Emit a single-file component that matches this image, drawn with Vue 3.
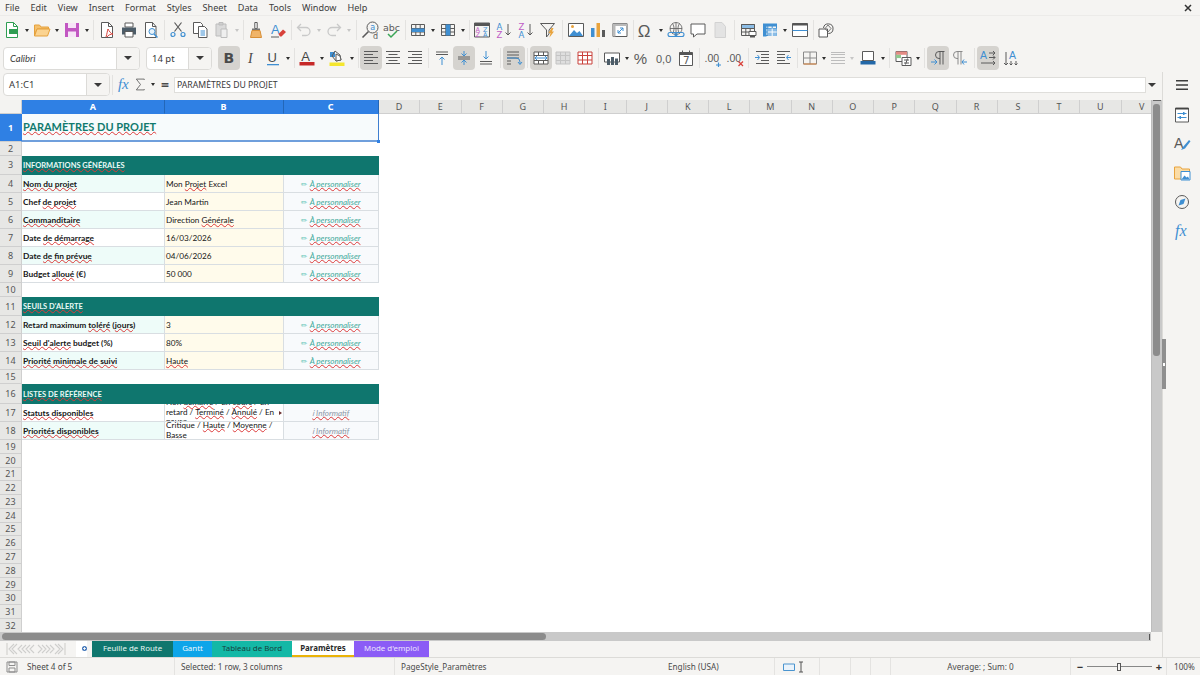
<script setup>
import { h } from 'vue'

const L = (d, stroke = '#5a5a5a', w = 1) => ({ d, stroke, fill: 'none', 'stroke-width': w })
const F = (d, fill, stroke = 'none') => ({ d, fill, stroke })
const T = (t, x, y, size, fill = '#555', style = 'normal', weight = 400, fam = 'DejaVu Sans, sans-serif') => ({ t, x, y, size, fill, style, weight, fam })

const B = '#3f8fd2', G = '#5a5a5a', O = '#e8a33d', R = '#d8413a', D = '#c9c9c9'
const SANS = 'Liberation Sans, sans-serif'
const SERIF = 'Liberation Serif, serif'
const lines = (ys, x1 = 2, x2 = 16, c = G) => L(ys.map((y) => `M${x1} ${y}H${x2}`).join(''), c)
const table = (c = G) => L('M2.5 3.5h13v11h-13zM2.5 7.5h13M2.5 11h13M6.8 3.5v11M11.2 3.5v11', c)
const dnArrow = (x, c = G) => L(`M${x} 3v11M${x - 2.5} 11.5l2.5 2.5 2.5-2.5`, c)

const icons = {
  new: [F('M3.5 1.5h7l4 4v11h-11z', '#fff', '#2f9e52'), L('M10.5 1.5v4h4', '#2f9e52'), F('M6 8h9v5H6z', '#2f9e52')],
  open: [F('M1.5 4h5l1.5 2h7.5v2H4L1.5 15z', '#f5c06c', '#e5a13c'), F('M4 8h13l-2.5 7H1.5z', '#fbd390', '#e5a13c')],
  save: [F('M2 2h14v14H2z', '#c257c2'), F('M5 2h8v5H5z', '#f7e4f7'), F('M5 10.5h8V16H5z', '#f7e4f7')],
  pdf: [F('M3.5 1.5h7l4 4v11h-11z', '#fff', G), L('M10.5 1.5v4h4'), L('M8 16c1-3 1.5-7 2-8 1 2 3 5 5 5-2 0-5 1-6 3', R)],
  print: [F('M5 2h8v4H5z', '#fff', G), F('M2 6.5h14v7H2z', '#4c5c68'), F('M5 10.5h8V16H5z', '#fff', G)],
  preview: [F('M3.5 1.5h7l3.5 4v11h-10.5z', '#fff', G), L('M10.5 1.5v4H14'), F('M7 10.5a3 3 0 1 0 6 0a3 3 0 1 0-6 0', '#e8f3fb', B), L('M12 13l3.5 3.5', B, 1.5)],
  cut: [L('M5.5 10.5L12.5 1.5M12.5 10.5L5.5 1.5', G, 1.2), L('M2 13.5a2 2 0 1 0 4 0a2 2 0 1 0-4 0M12 13.5a2 2 0 1 0 4 0a2 2 0 1 0-4 0', B, 1.2)],
  copy: [F('M2.5 1.5h7l2 2v9h-9z', '#fff', G), F('M7.5 5.5h6l2.5 2.5v8.5H7.5z', '#fff', G), L('M9.5 10h4.5M9.5 12h4.5M9.5 14h4.5', B)],
  paste: [F('M3 3h10v12H3z', '#dadada', '#bdbdbd'), F('M6 1.5h4V4H6z', '#cfcfcf', '#bdbdbd'), F('M8 8h6v8.5H8z', '#efefef', '#bdbdbd')],
  clone: [F('M7.8 1.5h2.4v6H7.8z', '#fff', G), F('M5 7.5h8v2H5z', '#777'), F('M5 9.5h8l1.5 7h-11z', '#f0b469', '#d88f37')],
  clear: [T('A', 2, 13, 13, '#3f8fd2', 'normal', 400, SANS), F('M9.5 13l4.5-4.5 3 2.5-4.5 4.5h-1.5z', R), L('M2 16h8', G)],
  undo: [L('M6 3L2.5 6.5 6 10M3 6.5h8a4 4 0 0 1 0 8H7', D, 1.3)],
  redo: [L('M12 3l3.5 3.5L12 10M15 6.5H7a4 4 0 0 0 0 8h4', D, 1.3)],
  find: [L('M6 6.5a5.5 5.5 0 1 0 11 0a5.5 5.5 0 1 0-11 0', G), L('M7.5 10.5l-6 6', G, 1.6), T('a', 9.2, 9, 8, B), T('d', 12, 17.5, 8, G)],
  spell: [T('abc', 0, 9.5, 9.5, G), L('M5 13l3 3 6-6', '#3aa657', 1.5)],
  rows: [table(), F('M2.5 7.5h13V11h-13z', B)],
  cols: [table(), F('M6.8 3.5h4.4v11H6.8z', B)],
  sort: [F('M1.5 2h15v3h-15z', '#555'), L('M1.5 2h15v14h-15z', G), T('A', 2.5, 10.5, 6.5, '#bf5bc6'), T('Z', 2.5, 16, 6.5, '#bf5bc6'), T('Z', 10, 10.5, 6.5, B), T('A', 10, 16, 6.5, B)],
  asc: [T('A', 1.5, 8.5, 8.5, B), T('Z', 1.5, 16.5, 8.5, '#bf5bc6'), dnArrow(13)],
  desc: [T('Z', 1.5, 8.5, 8.5, '#bf5bc6'), T('A', 1.5, 16.5, 8.5, B), dnArrow(13)],
  filter: [L('M1.5 2.5h14L10 9v4l-2.5 3V9z', G), F('M12.5 7l-3 5h2l-1 4.5 4.5-6h-2l1.5-3.5z', O)],
  image: [F('M1.5 2.5h15v13h-15z', '#fff', G), F('M2 15l5-6 3 3 2.5-2 3.5 5z', B), F('M4 5.5a1.5 1.5 0 1 0 3 0a1.5 1.5 0 1 0-3 0', O)],
  chart: [F('M2 7h3.5v9H2z', B), F('M7.5 2H11v14H7.5z', O), F('M13 9h3v7h-3z', G)],
  pivot: [F('M2 2.5h14v13H2z', '#fff', G), F('M2 2.5h14V5H2zM2 5h2.5v10.5H2z', '#b9b9b9'), L('M7 12l5-5M12 7H9M12 7v3M7 12h3M7 12V9', B)],
  omega: [T('Ω', 0.8, 15.5, 17, G, 'normal', 400, SANS)],
  link: [L('M3 7.5a6 6 0 1 0 12 0a6 6 0 1 0-12 0M3 7.5h12M9 1.5v12M5.5 2.5c2 3 2 7 0 10M12.5 2.5c-2 3-2 7 0 10', G, 0.8), L('M3 11.5h5a2 2 0 0 1 0 4H3a2 2 0 0 1 0-4M10 11.5h5a2 2 0 0 1 0 4h-5a2 2 0 0 1 0-4', B, 1.1)],
  comment: [F('M2 3h14v10H8l-3.5 3v-3H2z', '#fff', G)],
  note: [F('M4 1.5h7l3.5 4v11H4z', '#e3e3e3', '#d2d2d2')],
  headers: [table(), F('M2.5 3.5h13v4h-13z', '#8cbde6', G), F('M10 10.5h7v4h-7z', '#fff', G), F('M11 14.5h5v2h-5z', '#555')],
  freeze: [table(B), F('M2 2.5h14v3H2zM2 5.5h3.5v10H2z', B), F('M6.8 7.5h9V15h-9z', '#8cbde6'), L('M6.8 11h9M11.2 7.5V15', '#fff')],
  split: [F('M1.5 2.5h15v13h-15z', '#fff', G), F('M1.5 2.5h15v2h-15z', '#555'), L('M1.5 9.5h15', B)],
  shapes: [F('M2 8h8.5v8H2z', '#fff', G), L('M6.5 7a4.8 4.8 0 1 1 4.8 5.5', G), L('M11 4l3 3.5-3 3.5-3-3.5z', G, 0.8)],
  B: [T('B', 3.5, 14, 14, '#4a4a4a', 'normal', 700)],
  I: [T('I', 6, 14, 14, '#4a4a4a', 'italic', 400, SERIF)],
  U: [T('U', 3.5, 13, 13, '#4a4a4a', 'normal', 400, SANS), F('M3 15h12v1.3H3z', B)],
  color: [T('A', 3.3, 11.5, 13, '#444', 'normal', 400, SANS), F('M1.5 13h15v3.5h-15z', '#c62828')],
  bg: [F('M2 3h5v5H2z', B), L('M7 2l5 4 1 5-5 1-4-5z', G), F('M8 5l4 2 1 4-5 1z', '#fff', G), F('M1.5 13.5h15V17h-15z', '#f5e62e')],
  left: [lines([2.5, 8.5, 14.5], 2, 16), lines([5.5, 11.5], 2, 11)],
  center: [lines([2.5, 8.5, 14.5], 2, 16), lines([5.5, 11.5], 4.5, 13.5)],
  right: [lines([2.5, 8.5, 14.5], 2, 16), lines([5.5, 11.5], 6, 16)],
  top: [lines([3, 5.5], 3, 15), L('M9 16V8M6.5 10.5L9 8l2.5 2.5', B)],
  mid: [lines([8, 10], 3, 15), L('M9 2v5M6.5 4.5L9 7l2.5-2.5M9 16v-5M6.5 13.5L9 11l2.5 2.5', B)],
  bot: [lines([12.5, 15], 3, 15), L('M9 2v8M6.5 7.5L9 10l2.5-2.5', B)],
  wrap: [lines([3, 6, 9], 2, 14), L('M2 12h4M2 15h4', G), L('M2 9h9a4 4 0 0 1 4 4v2M13 13l2 2.5 2-2.5', B)],
  merge: [F('M2 3h14v12H2z', '#fff', G), L('M2 6.5h14M2 11.5h14M6.5 3v3.5M11.5 3v3.5M6.5 11.5V15M11.5 11.5V15', G), L('M3 9h12M5 7l-2 2 2 2M13 7l2 2-2 2', B)],
  unmerge: [F('M2 3h14v12H2z', '#dedede', '#c4c4c4'), L('M2 6.5h14M2 11.5h14M6.5 3v12M11.5 3v12', '#c4c4c4')],
  splitc: [F('M2 3h14v12H2z', '#fff', '#c9423c'), L('M2 6.5h14M2 11h14M6.5 3v12M11.5 3v12', '#c9423c')],
  currency: [F('M1.5 4h15v9h-15z', '#fff', G), F('M4 10h3v6H4zM8 8h3v8H8zM12 9.5h3V16h-3z', '#4c5c68')],
  percent: [T('%', 0.8, 14.5, 15, G, 'normal', 400, SANS)],
  number: [T('0,0', 1, 13.5, 11, G, 'normal', 400, SANS)],
  date: [F('M2.5 3.5h13v13h-13z', '#fff', G), F('M2.5 3.5h13V6h-13z', '#555'), L('M5.5 1.5v3M12.5 1.5v3'), T('7', 6, 15, 10.5, G)],
  addd: [T('.00', 0.5, 13, 10.5, G, 'normal', 400, SANS), L('M12 16h5M14.5 13.5v5', B, 1.2)],
  deld: [T('.00', 0.5, 13, 10.5, G, 'normal', 400, SANS), L('M12.5 12.5l4.5 4.5M17 12.5l-4.5 4.5', R, 1.2)],
  indent: [lines([2.5, 14.5], 3, 16), lines([5.5, 8.5, 11.5], 8, 16), L('M2 8.5h4M4.5 6l2 2.5-2 2.5', B)],
  outdent: [lines([2.5, 14.5], 2, 15), lines([5.5, 8.5, 11.5], 2, 10), L('M16 8.5h-4M13.5 6l-2 2.5 2 2.5', B)],
  border: [L('M2.5 3h13v12h-13zM9 3v12M2.5 9h13', '#8a8a8a'), L('M2.5 15h13', '#d9813b')],
  bstyle: [lines([3.5, 5.5, 8.5, 11.5, 14.5], 2, 16, '#bdbdbd')],
  bcolor: [F('M3.5 2.5h11v9h-11z', '#fff', G), F('M1.5 12h15v3.5h-15z', '#2368a8')],
  cond: [F('M2 2.5h11v10H2z', '#fff', G), F('M2 2.5h11v3.3H2z', '#e48b84'), F('M2 5.8h5v3.3H2z', '#8fc98e'), F('M8 8.5h9v8H8z', '#fff', G), L('M10 11h5M10 14h5M11.5 15.5l2-6', G)],
  ltr: [L('M11 2.5v13M14 2.5v13M15.5 2.5H10a3.5 3.5 0 0 0 0 7h1', G), L('M2 13h6M5.5 10.5L8 13l-2.5 2.5', B)],
  rtl: [L('M7 2.5v13M10 2.5v13M11.5 2.5H6a3.5 3.5 0 0 0 0 7h1', '#8a8a8a'), L('M16 13h-5M13 10.5L11 13l2 2.5', B)],
  lr: [T('A', 1, 10, 10.5, B, 'normal', 400, SANS), L('M10 4h6M14 2l2 2-2 2M10 8.5h6M14 6.5l2 2-2 2', G), L('M2 14h14M14 12l2 2-2 2', G)],
  tvert: [T('A', 8, 10, 10.5, B, 'normal', 400, SANS), L('M5 3v13M3 14l2 2 2-2M10 12v4M8.5 14.5L10 16l1.5-1.5M15 12v4M13.5 14.5L15 16l1.5-1.5', G)],
  sum: [L('M13.5 3.5v-1H4l5 6.5-5 6.5h9.5v-1', G, 1)],
  menu: [F('M3 4h12v1.6H3zM3 8.2h12v1.6H3zM3 12.4h12V14H3z', '#3c3c3c')],
  props: [F('M2.5 2h13v14h-13z', '#fff', G), F('M2.5 2h13v1.5h-13z', '#444'), L('M4.5 7.5h9M4.5 11.5h9', B), F('M10 6h1.5v3H10zM6.5 10H8v3H6.5z', B)],
  styles: [T('A', 1, 13, 14, G, 'normal', 400, SANS), F('M8 15l2-3 6-7 1.5 1.2-5.5 7.3z', B)],
  gallery: [F('M1.5 3h6L9 5h7.5v10h-15z', '#fbdca6', O), F('M8 7.5h9V16H8z', '#fff', B), F('M8.5 15.5l3-4 2 2 1.5-1 1.5 3z', B)],
  nav: [L('M2.5 9a6.5 6.5 0 1 0 13 0a6.5 6.5 0 1 0-13 0', G), F('M12.5 5.5L10.5 11l-5 1.5 2-5.5z', B)],
  fx: [T('fx', 2, 14, 16, B, 'italic', 400, SERIF)],
}

const Icon = (props) =>
  h('svg', { class: 'ic', viewBox: '0 0 18 18', width: props.size || 18, height: props.size || 18 },
    (icons[props.name] || []).map((s) =>
      s.t
        ? h('text', { x: s.x, y: s.y, fill: s.fill, 'font-size': s.size, 'font-style': s.style, 'font-weight': s.weight, 'font-family': s.fam }, s.t)
        : h('path', s)))
Icon.props = ['name', 'size']

const parse = (str) =>
  str.split(' ').map((tok) => {
    if (tok[0] === '|') return { kind: 'sep', w: +tok.slice(1) }
    if (/^v\d/.test(tok)) return { kind: 'dd', w: parseInt(tok.slice(1), 10), off: tok.endsWith('x') }
    if (tok[0] === '_') return { kind: 'gap', w: +tok.slice(1) }
    const active = tok.endsWith('*')
    return { kind: 'icon', name: active ? tok.slice(0, -1) : tok, active }
  })

const bar1 = parse('new v8 open v8 save v8 |5 pdf print preview |5 cut copy paste v8x |4 clone clear |4 undo v8x redo v8x |6 find spell |4 rows v8 cols v8 |4 sort asc desc filter |6 image chart pivot |4 omega v8 link comment note |6 headers freeze v8 split |4 shapes')
const bar2 = parse('B* I U v8 |4 color v8 bg v8 |4 left* center right |5 top mid* bot |6 wrap* |5 merge* unmerge splitc |5 currency v8 percent number date |5 addd deld |5 indent outdent |4 border v6 bstyle v6x _2 bcolor v8 |5 cond v8 |5 ltr* rtl |6 lr* tvert')

const menus = ['File', 'Edit', 'View', 'Insert', 'Format', 'Styles', 'Sheet', 'Data', 'Tools', 'Window', 'Help']
const sideIcons = ['props', 'styles', 'gallery', 'nav', 'fx']
const columns = 'DEFGHIJKLMNOPQRSTUV'.split('')

const PERSO = '✏ *À personnaliser*'
const INFO = '*ℹ Informatif*'
const rows = [
  { h: 28, n: 1, title: '*PARAMÈTRES DU PROJET*', sel: true },
  { h: 13.5, n: 2 },
  { h: 19.5, n: 3, section: '*INFORMATIONS GÉNÉRALES*' },
  { h: 18, n: 4, a: '*Nom du projet*', b: 'Mon *Projet* Excel', c: PERSO, tint: true },
  { h: 18, n: 5, a: 'Chef *de projet*', b: 'Jean Martin', c: PERSO },
  { h: 18, n: 6, a: '*Commanditaire*', b: 'Direction *Générale*', c: PERSO, tint: true },
  { h: 18, n: 7, a: 'Date *de démarrage*', b: '16/03/2026', c: PERSO },
  { h: 18, n: 8, a: 'Date *de fin prévue*', b: '04/06/2026', c: PERSO, tint: true },
  { h: 18, n: 9, a: 'Budget *alloué* (€)', b: '50 000', c: PERSO },
  { h: 14, n: 10 },
  { h: 19, n: 11, section: "*SEUILS D'ALERTE*" },
  { h: 18, n: 12, a: 'Retard maximum *toléré* (*jours*)', b: '3', c: PERSO, tint: true },
  { h: 18, n: 13, a: "*Seuil d'alerte* budget (%)", b: '80%', c: PERSO },
  { h: 18, n: 14, a: '*Priorité minimale de suivi*', b: '*Haute*', c: PERSO, tint: true },
  { h: 14, n: 15 },
  { h: 20, n: 16, section: '*LISTES DE RÉFÉRENCE*' },
  { h: 18, n: 17, a: '*Statuts disponibles*', b: 'Non *démarré* / En *cours* / En retard / *Terminé* / *Annulé* / En pause', c: INFO, info: true, clip: true, plain: true },
  { h: 18, n: 18, a: '*Priorités disponibles*', b: 'Critique / *Haute* / *Moyenne* / *Basse*', c: INFO, info: true, plain: true, tint: true },
]
for (let n = 19; n <= 33; n++) rows.push({ h: 13.77, n })

const segs = (text) => (text || '').split('*').map((t, i) => ({ t, sq: i % 2 === 1 }))

const tabs = [
  { label: 'Feuille de Route', cls: 'route' },
  { label: 'Gantt', cls: 'gantt' },
  { label: 'Tableau de Bord', cls: 'board' },
  { label: 'Paramètres', cls: 'params' },
  { label: "Mode d'emploi", cls: 'mode' },
]
</script>

<template>
  <div class="app">
    <div class="menubar">
      <span v-for="m in menus" :key="m" class="menu-item">{{ m }}</span>
      <svg class="close" viewBox="0 0 8 8" width="8" height="8"><path d="M1 1l6 6M7 1L1 7" stroke="#333" stroke-width="1.5" /></svg>
    </div>

    <div class="toolbar bar1">
      <template v-for="(it, i) in bar1" :key="i">
        <span v-if="it.kind === 'sep'" class="sep" :style="{ width: it.w + 'px' }"></span>
        <span v-else-if="it.kind === 'dd'" class="dd" :class="{ off: it.off }" :style="{ width: it.w + 'px' }"></span>
        <span v-else-if="it.kind === 'gap'" :style="{ width: it.w + 'px' }"></span>
        <span v-else class="tool" :class="{ active: it.active }"><Icon :name="it.name" /></span>
      </template>
    </div>

    <div class="toolbar bar2">
      <div class="combo font-box"><span class="combo-text italic">Calibri</span><span class="combo-btn"><i class="dd big"></i></span></div>
      <div class="combo size-box"><span class="combo-text">14 pt</span><span class="combo-btn"><i class="dd big"></i></span></div>
      <template v-for="(it, i) in bar2" :key="i">
        <span v-if="it.kind === 'sep'" class="sep" :style="{ width: it.w + 'px' }"></span>
        <span v-else-if="it.kind === 'dd'" class="dd" :class="{ off: it.off }" :style="{ width: it.w + 'px' }"></span>
        <span v-else-if="it.kind === 'gap'" :style="{ width: it.w + 'px' }"></span>
        <span v-else class="tool" :class="{ active: it.active }"><Icon :name="it.name" /></span>
      </template>
    </div>

    <div class="workspace">
      <div class="main">
        <div class="formula">
          <div class="combo name-box"><span class="combo-text">A1:C1</span><span class="combo-btn"><i class="dd big"></i></span></div>
          <span class="sep fx-sep"></span>
          <span class="ftool"><Icon name="fx" size="17" /></span>
          <span class="sum"><Icon name="sum" size="15" /></span>
          <span class="dd sum-dd"></span>
          <span class="equals">=</span>
          <div class="input">PARAMÈTRES DU PROJET</div>
          <span class="input-dd"><i class="dd big"></i></span>
        </div>

        <div class="sheet-wrap">
          <div class="sheet">
            <div class="col-head">
              <span class="corner"></span>
              <span class="ch sel col-a">A</span>
              <span class="ch sel col-b">B</span>
              <span class="ch sel col-c">C</span>
              <span v-for="c in columns" :key="c" class="ch col-x">{{ c }}</span>
            </div>
            <div v-for="r in rows" :key="r.n" class="row" :style="{ height: r.h + 'px' }">
              <span class="rh" :class="{ sel: r.sel }">{{ r.n }}</span>
              <div v-if="r.title" class="title-cell">
                <span><template v-for="(s, i) in segs(r.title)" :key="i"><span :class="{ sq: s.sq }">{{ s.t }}</span></template></span>
                <i class="handle"></i>
              </div>
              <div v-else-if="r.section" class="section-cell">
                <span><template v-for="(s, i) in segs(r.section)" :key="i"><span :class="{ sq: s.sq }">{{ s.t }}</span></template></span>
              </div>
              <template v-else-if="r.a">
                <div class="cell a" :class="{ tint: r.tint }"><span><template v-for="(s, i) in segs(r.a)" :key="i"><span :class="{ sq: s.sq }">{{ s.t }}</span></template></span></div>
                <div class="cell b" :class="{ plain: r.plain }">
                  <span class="b-text" :class="{ wrap: r.plain }"><template v-for="(s, i) in segs(r.b)" :key="i"><span :class="{ sq: s.sq }">{{ s.t }}</span></template></span>
                  <i v-if="r.clip" class="clip-mark"></i>
                </div>
                <div class="cell c" :class="{ info: r.info }"><span><template v-for="(s, i) in segs(r.c)" :key="i"><span :class="s.sq ? 'sq' : 'pen'">{{ s.t }}</span></template></span></div>
              </template>
            </div>
          </div>
          <div class="vscroll">
            <span class="vtop"></span>
            <span class="vthumb"></span>
          </div>
        </div>

        <div class="hscroll"><span class="hthumb"></span><span class="hend"></span></div>

        <div class="tabbar">
          <svg class="tabnav" viewBox="0 0 62 16" width="62" height="16">
            <path d="M2 2v12M9 3L4 8l5 5M12 3L7 8l5 5M17 4l-4 4 4 4M21 4l-4 4 4 4M25 4l-4 4 4 4M29 4l-4 4 4 4M33 4l4 4-4 4M37 4l4 4-4 4M41 4l4 4-4 4M45 4l4 4-4 4M50 3l5 5-5 5M53 3l5 5-5 5M60 2v12" stroke="#cfcfcd" stroke-width="1.1" fill="none" />
          </svg>
          <span class="newtab"><svg viewBox="0 0 14 16" width="14" height="16"><path d="M1 0h11v16H1z" fill="#fff" /><circle cx="9.5" cy="7.5" r="2.5" fill="#3f74b8" /><path d="M8 7.5h3M9.5 6v3" stroke="#fff" stroke-width="0.8" /></svg></span>
          <span v-for="t in tabs" :key="t.label" class="tab" :class="t.cls">{{ t.label }}</span>
        </div>
      </div>

      <div class="sidebar">
        <i class="side-handle"></i>
        <span class="side-ic menu-ic"><Icon name="menu" /></span>
        <span class="side-rule"></span>
        <span v-for="s in sideIcons" :key="s" class="side-ic"><Icon :name="s" /></span>
      </div>
    </div>

    <div class="status">
      <span class="st st-save"><svg viewBox="0 0 12 12" width="12" height="12"><path d="M1 1h10v10H1z" fill="none" stroke="#8d8d8d" /><path d="M3 1h6v3.5H3zM3 7h6v4H3z" fill="none" stroke="#8d8d8d" /></svg></span>
      <span class="st st-sheet">Sheet 4 of 5</span>
      <span class="st st-sel">Selected: 1 row, 3 columns</span>
      <span class="st st-page">PageStyle_Paramètres</span>
      <span class="st st-lang">English (USA)</span>
      <span class="st st-ins"><svg viewBox="0 0 24 12" width="24" height="12"><path d="M1.5 3h11v6.5h-11z" fill="#eaf3fb" stroke="#4a94cf" /><path d="M17 1h4M19 1v10M17 11h4" stroke="#555" fill="none" /></svg></span>
      <span class="st st-e1"></span>
      <span class="st st-e2"></span>
      <span class="st st-e2"></span>
      <span class="st st-avg">Average: ; Sum: 0</span>
      <span class="st st-zoom">
        <b class="pm">−</b>
        <span class="slider"><i class="knob"></i></span>
        <b class="pm">+</b>
      </span>
      <span class="st-pct">100%</span>
    </div>
  </div>
</template>

<style scoped>
.app { width: 1200px; height: 675px; display: flex; flex-direction: column; overflow: hidden; background: #f5f4f2; font-family: "Noto Sans", sans-serif; color: #3c3c3c; }

.menubar { height: 16px; flex: none; display: flex; align-items: center; padding-left: 5px; gap: 11px; font-size: 9.1px; position: relative; border-bottom: 1px solid #ecebe9; box-sizing: border-box; }
.menu-item { line-height: 16px; }
.close { margin-left: auto; margin-right: 8px; }

.toolbar { flex: none; height: 28px; display: flex; align-items: center; }
.bar1 { padding-left: 1px; }
.bar2 { padding-left: 3px; }
.tool { width: 22px; height: 24px; flex: none; display: flex; align-items: center; justify-content: center; border-radius: 4px; }
.tool.active { background: #d5d3cf; }
.ic { display: block; }
.sep { flex: none; height: 20px; display: block; background: linear-gradient(#e3e2e0, #e3e2e0) center / 1px 100% no-repeat; }
.dd { flex: none; height: 24px; display: block; position: relative; }
.dd::after { content: ""; position: absolute; left: 50%; top: 50%; margin: -1.5px 0 0 -2.5px; border: 2.5px solid transparent; border-top: 3px solid #2e2e2e; border-bottom: 0; }
.dd.off::after { border-top-color: #c6c6c6; }
.dd.big { display: block; width: 14px; height: 14px; }
.dd.big::after { margin: -2px 0 0 -4px; border-width: 4px; border-top-width: 4.5px; border-bottom: 0; border-top-color: #3a3a3a; }

.combo { flex: none; height: 23px; display: flex; background: #fff; border: 1px solid #dcdbd8; border-radius: 4px; box-sizing: border-box; font-size: 9.5px; overflow: hidden; }
.font-box { width: 137px; margin-right: 6px; }
.size-box { width: 66px; margin-right: 6px; }
.name-box { width: 107px; margin-left: 3px; }
.combo-text { flex: 1; padding-left: 5px; line-height: 21px; color: #3a3a3a; }
.italic { font-style: italic; font-family: "Lato", sans-serif; padding-left: 6px; }
.size-box .combo-text { padding-left: 5px; }
.combo-btn { width: 22px; flex: none; display: flex; align-items: center; justify-content: center; background: #f5f4f2; border-left: 1px solid #dcdbd8; }

.workspace { flex: 1; min-height: 0; display: flex; }
.main { flex: none; width: 1162px; display: flex; flex-direction: column; min-height: 0; }

.formula { height: 28px; flex: none; display: flex; align-items: center; position: relative; box-sizing: border-box; padding-bottom: 3px; }
.fx-sep { width: 5px; }
.ftool { width: 18px; flex: none; display: flex; justify-content: center; }
.sum { width: 15px; flex: none; display: flex; justify-content: center; }
.sum-dd { width: 10px; }
.equals { width: 14px; text-align: center; font-size: 14px; color: #4a4a4a; font-weight: 700; flex: none; }
.input { flex: none; width: 972px; height: 16px; margin-left: 2px; background: #fff; border: 1px solid #dfdedb; box-sizing: border-box; font-size: 8.7px; line-height: 14px; padding-left: 2px; color: #3a3a3a; }
.input-dd { width: 12px; flex: none; display: flex; align-items: center; justify-content: center; }

.sheet-wrap { flex: 1; min-height: 0; display: flex; }
.sheet { flex: 1; min-width: 0; background: #fff; overflow: hidden; display: flex; flex-direction: column; }
.vscroll { flex: none; width: 11px; background: #c9c9c9; position: relative; border-left: 1px solid #bdbdbd; box-sizing: border-box; background-clip: padding-box; }
.vtop { position: absolute; left: 1px; right: 1px; top: 0; height: 1px; background: #666; }
.vthumb { position: absolute; left: 1px; width: 7px; top: 4px; height: 252px; background: #8c8c8c; border-radius: 3px; }

.col-head { height: 14px; flex: none; display: flex; background: #e7e7e5; font-size: 9px; }
.corner { width: 22px; flex: none; box-sizing: border-box; border-right: 1px solid #cfcfcf; border-bottom: 1px solid #cfcfcf; background: #f3f3f1; }
.ch { flex: none; box-sizing: border-box; text-align: center; line-height: 14px; border-right: 1px solid #cfcfcf; border-bottom: 1px solid #cfcfcf; color: #555; }
.ch.sel { background: #2f80e4; color: #fff; font-weight: 700; border-right-color: #2367b8; border-bottom-color: #2f80e4; }
.col-a { width: 142.5px; }
.col-b { width: 119px; }
.col-c { width: 95.5px; }
.col-x { width: 41.25px; }

.row { flex: none; display: flex; font-family: "Lato", sans-serif; font-size: 8.4px; color: #161616; }
.rh { width: 22px; flex: none; box-sizing: border-box; display: flex; align-items: center; justify-content: center; background: #e7e7e5; border-right: 1px solid #cfcfcf; border-bottom: 1px solid #cfcfcf; font-family: "Noto Sans", sans-serif; font-size: 9px; color: #555; overflow: hidden; }
.rh.sel { background: #2f80e4; color: #fff; font-weight: 700; border-right-color: #2f80e4; }

.sq { text-decoration: underline wavy #dc3a3a; text-decoration-thickness: 0.8px; text-underline-offset: 0; text-decoration-skip-ink: none; }
.pen { font-family: "DejaVu Sans", sans-serif; font-style: normal; color: #5cc4b4; font-size: 7.5px; }

.title-cell { width: 357px; flex: none; box-sizing: border-box; position: relative; display: flex; align-items: center; padding: 0 0 2px 1px; background: #f7fbfc; border-right: 1px solid #3f7fd0; border-bottom: 2px solid #6f9fdc; font-weight: 700; font-size: 11px; color: #117a6e; }
.handle { position: absolute; right: -2px; bottom: -3px; width: 3px; height: 3px; background: #2f80e4; }
.section-cell { width: 357px; flex: none; box-sizing: border-box; display: flex; align-items: center; padding-left: 1px; background: #0f766e; color: #eafaf6; font-weight: 700; font-size: 7.5px; }

.cell { flex: none; box-sizing: border-box; display: flex; align-items: center; overflow: hidden; border-right: 1px solid #d9dee2; border-bottom: 1px solid #d9dee2; }
.cell.a { width: 142.5px; padding-left: 1px; font-weight: 700; background: #fff; }
.cell.a.tint { background: #eefcf9; }
.cell.b { width: 119px; padding-left: 1.5px; background: #fffbeb; position: relative; font-size: 8.2px; }
.cell.b.plain { background: #fff; padding-right: 8px; }
.b-text.wrap { display: block; line-height: 9.5px; }
.clip-mark { position: absolute; right: 1px; top: 7px; border: 2.5px solid transparent; border-left: 3.5px solid #6b2f2f; border-right: 0; }
.cell.c { width: 95.5px; justify-content: center; background: #f8fafc; color: #3fa99b; font-size: 8px; font-style: italic; }
.cell.c.info { color: #8b97a6; }

.hscroll { height: 9px; flex: none; background: #c9c9c9; position: relative; margin-right: 11px; }
.hthumb { position: absolute; left: 2px; top: 1px; bottom: 1px; width: 544px; background: #8c8c8c; border-radius: 4px; }
.hend { position: absolute; right: 1px; top: 2px; bottom: 1px; width: 1px; background: #555; }

.tabbar { height: 16px; flex: none; display: flex; align-items: stretch; font-size: 7.9px; }
.tabnav { flex: none; margin-left: 5px; }
.newtab { flex: none; margin-left: 8px; width: 17px; display: flex; justify-content: flex-start; align-items: stretch; }
.tab { flex: none; box-sizing: border-box; text-align: center; line-height: 15px; color: #fff; }
.route { width: 81px; background: #0f766e; color: #e8f7f3; }
.gantt { width: 39px; background: #0ea5e9; color: #eaf8ff; }
.board { width: 80px; background: #14b8a6; color: #17423d; }
.params { width: 62px; background: #fff; color: #2a2a2a; font-weight: 700; border-bottom: 2px solid #eab308; }
.mode { width: 75px; background: #8b5cf6; color: #ece4ff; }

.sidebar { flex: 1; position: relative; display: flex; flex-direction: column; align-items: center; border-left: 1px solid #dcdbd8; padding-top: 4px; }
.side-ic { height: 18px; display: block; margin-bottom: 11px; }
.menu-ic { margin-bottom: 3px; }
.side-rule { height: 9px; display: block; flex: none; }
.side-handle { position: absolute; left: -1px; top: 267px; width: 4px; height: 50px; background: #8f8f8f; }
.side-handle::after { content: ""; position: absolute; left: 1px; top: 24px; width: 2px; height: 3px; background: #fff; }

.status { height: 18px; flex: none; display: flex; align-items: center; font-size: 8.2px; color: #4a4a4a; border-top: 1px solid #dcdbd8; box-sizing: border-box; }
.st { height: 100%; flex: none; box-sizing: border-box; border-right: 1px solid #e4e3e1; display: flex; align-items: center; white-space: nowrap; }
.st-save { width: 26px; padding-left: 6px; border-right: 0; }
.st-sheet { width: 149px; padding-left: 1px; }
.st-sel { width: 220px; padding-left: 6px; }
.st-page { width: 218px; padding-left: 6px; border-right: 0; }
.st-lang { width: 162px; padding-left: 55px; }
.st-ins { width: 45px; padding-left: 7px; }
.st-e1 { width: 31px; }
.st-e2 { width: 20px; }
.st-avg { width: 180px; justify-content: center; }
.st-zoom { width: 96px; padding-left: 5px; gap: 3px; border-right: 1px solid #e4e3e1; }
.pm { font-weight: 700; font-size: 11px; color: #333; width: 8px; text-align: center; line-height: 14px; }
.slider { width: 65px; height: 1px; background: #888; position: relative; display: block; }
.knob { position: absolute; left: 30px; top: -3px; width: 2px; height: 6px; background: #f5f4f2; border: 1px solid #555; }
.st-pct { margin-left: 7px; white-space: nowrap; }
</style>

<style>
html, body { margin: 0; background: #f5f4f2; }
</style>
